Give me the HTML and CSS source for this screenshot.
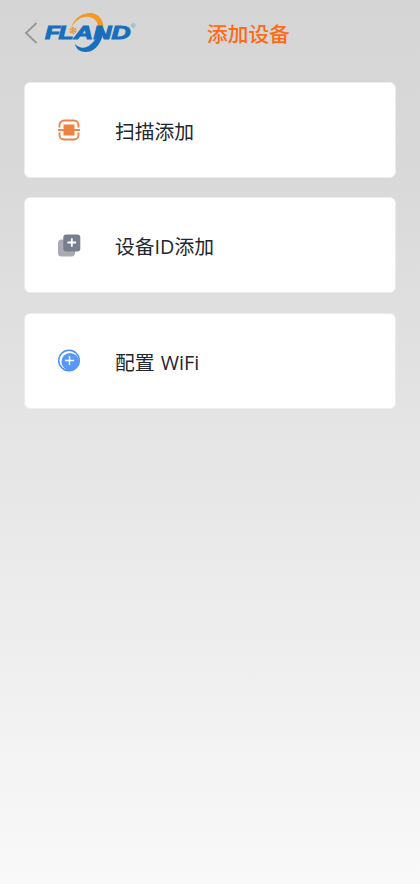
FILE: index.html
```html
<!DOCTYPE html>
<html lang="zh-CN">
<head>
<meta charset="utf-8">
<title>添加设备</title>
<link rel="stylesheet" href="styles.css">
</head>
<body>
<header class="bar">
  <svg class="back" width="16" height="26" viewBox="0 0 16 26"><path d="M13.500 3 3 13l10.500 10"/></svg>
  <svg class="logo" width="96" height="46" viewBox="42 9 96 46">
    <path class="orange" d="M71 28C74 18 82 13 91 13C101 14 106 24 102 34L98 34C100 26 97 18 89 17C81 16 75 21 71 28Z"/>
    <path class="blue" d="M98.500 29H103.500C103 41 96 52 86 52C80 52 76 49 75 44C80 49 86 49 91 44C96 40 98 35 98.500 29Z"/>
    <g class="word">
      <text x="45" y="39" textLength="15" lengthAdjust="spacingAndGlyphs">F</text>
      <text x="58.500" y="39" textLength="15" lengthAdjust="spacingAndGlyphs">L</text>
      <text x="74" y="39" textLength="19" lengthAdjust="spacingAndGlyphs">A</text>
      <text x="93.500" y="39" textLength="18" lengthAdjust="spacingAndGlyphs">N</text>
      <text x="111.500" y="39" textLength="19" lengthAdjust="spacingAndGlyphs">D</text>
    </g>
    <path class="flake" d="M73 27v7M70 28.700l6 3.500M70 32.200l6-3.500"/>
    <circle class="flake-ring" cx="73" cy="30.500" r="3"/>
    <text class="reg" x="131" y="28">®</text>
  </svg>
  <h1 class="title">添加设备</h1>
</header>
<main class="list">
  <a class="card">
    <svg class="icon" width="24" height="24" viewBox="0 0 24 24">
      <path class="scan-line" d="M2.500 9.500V7A4.500 4.500 0 0 1 7 2.500h10A4.500 4.500 0 0 1 21.500 7v2.500M2.500 14.500V17A4.500 4.500 0 0 0 7 21.500h10a4.500 4.500 0 0 0 4.500-4.500v-2.500"/>
      <path class="scan-fill" d="M6.500 6.500h11v11h-11z"/>
      <path class="scan-line" d="M1 12h22"/>
    </svg>
    <span class="label">扫描添加</span>
  </a>
  <a class="card">
    <svg class="icon" width="24" height="24" viewBox="0 0 24 24">
      <rect x="1" y="6.500" width="17" height="17" rx="3.500" fill="#a9aab4"/>
      <rect x="6.300" y="1.500" width="17" height="17" rx="3" fill="#777e8c"/>
      <path class="plus" d="M14.800 5.200v8.600M10.500 9.500h8.600"/>
    </svg>
    <span class="label">设备ID添加</span>
  </a>
  <a class="card">
    <svg class="icon" width="24" height="24" viewBox="0 0 24 24">
      <circle cx="12" cy="12.500" r="10.300" fill="#fff" stroke="#4a8df0" stroke-width="1.400"/>
      <circle cx="13.200" cy="13.700" r="8.800" fill="#5798fa"/>
      <path class="plus thin" d="M12.500 8v9M8 12.500h9"/>
    </svg>
    <span class="label">配置 WiFi</span>
  </a>
</main>
</body>
</html>
```
FILE: styles.css
```css
* {
  box-sizing: border-box;
}

body {
  margin: 0;
  height: 884px;
  overflow: hidden;
  background: linear-gradient(#d5d5d5, #d9d9d9 20%, #f9f9f9);
  font-family: "Open Sans", "Noto Sans CJK SC", sans-serif;
}

.bar {
  display: flex;
  align-items: center;
  height: 66px;
  padding-left: 23px;
}

.back {
  fill: none;
  stroke: #969696;
  stroke-width: 1.8;
}

.logo {
  margin: 0 0 2px 3px;
}

.orange {
  fill: #f39820;
}

.blue {
  fill: #176fbd;
}

.word {
  fill: #176fbd;
  stroke: #176fbd;
  stroke-width: 1;
  font: italic 700 17.5px "Liberation Sans", sans-serif;
}

.flake {
  stroke: #f39820;
  stroke-width: 1.3;
}

.flake-ring {
  fill: none;
  stroke: #f39820;
  stroke-width: 1.3;
  stroke-dasharray: 2 1.1;
}

.reg {
  fill: #4c8fc4;
  font: 6px "Liberation Sans", sans-serif;
}

.title {
  margin: 0 0 0 69px;
  color: #ff6a13;
  font: 500 20.7px/30px "Noto Sans CJK SC", sans-serif;
}

.list {
  display: grid;
  gap: 19.4px;
  padding: 16px 24px 0;
}

.card {
  display: flex;
  align-items: center;
  height: 96px;
  padding-left: 32px;
  border: 1px solid #ececee;
  border-radius: 6px;
  background: #fff;
}

.icon {
  margin-bottom: 1px;
}

.scan-line {
  fill: none;
  stroke: #ed8243;
  stroke-width: 1.9;
}

.scan-fill {
  fill: #ed8243;
}

.plus {
  stroke: #fff;
  stroke-width: 1.8;
}

.plus.thin {
  stroke-width: 1.4;
}

.label {
  margin: 4px 0 0 34px;
  color: #22272e;
  font-size: 19.8px;
  line-height: 30px;
  word-spacing: 1px;
}
```
